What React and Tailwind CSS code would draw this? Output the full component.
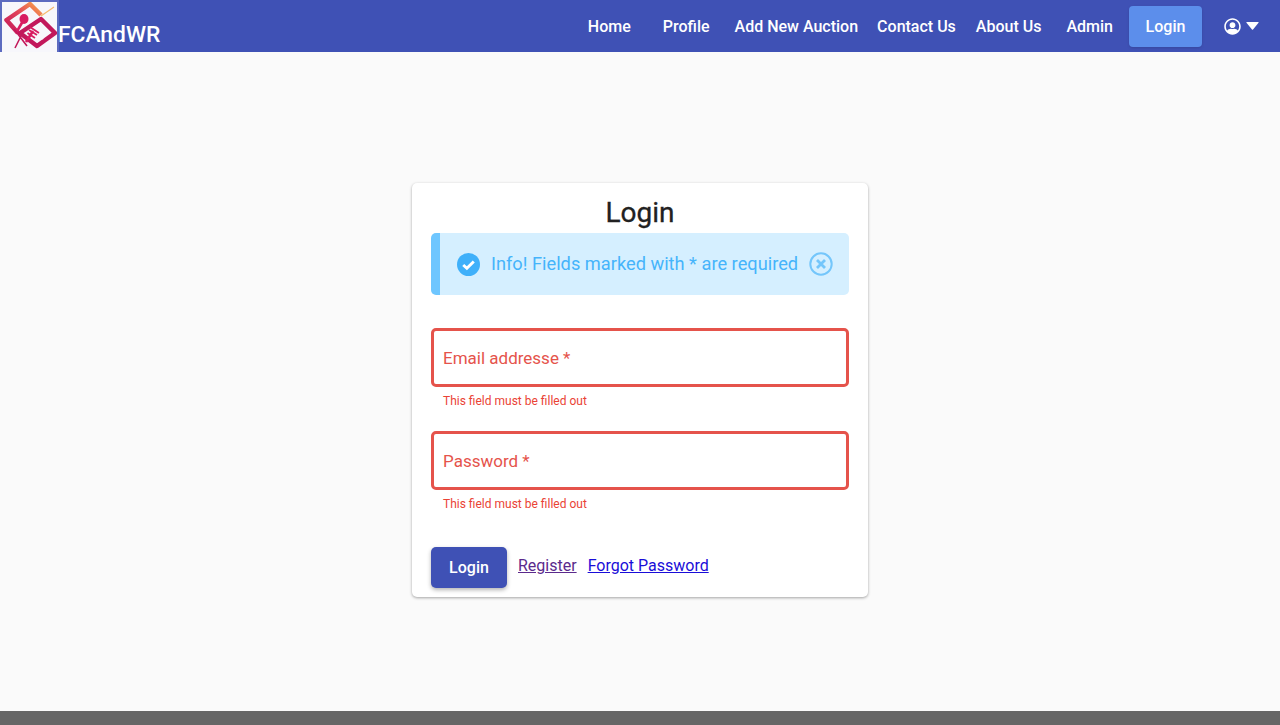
import React from "react";

/* ─── Logo ────────────────────────────────────────────────────── */
function Logo() {
  return (
    <div className="w-[59px] h-[52px] shrink-0 bg-[#f7f7fb] border-2 border-b-0 border-[#5c6bc0]">
      <svg width="55" height="50" viewBox="2 2 55 50" fill="none">
        <defs>
          <linearGradient id="logoGrad" x1="0" y1="1" x2="1" y2="0">
            <stop offset="0" stopColor="#c2185b" />
            <stop offset="0.5" stopColor="#e0405a" />
            <stop offset="1" stopColor="#f9a64a" />
          </linearGradient>
        </defs>
        <path d="M41 16 L54 7" stroke="#f6b96b" strokeWidth="1.200" />
        <path d="M18 33 L6.500 20 L30 4 L41 15" stroke="url(#logoGrad)" strokeWidth="4.500" strokeLinejoin="round" />
        <path d="M20 33 L41 19 L55 33 L37 46 Z" stroke="#c2185b" strokeWidth="4.500" strokeLinejoin="round" fill="#f7f7fb" />
        <ellipse cx="24" cy="19" rx="4.500" ry="5" fill="#d81b60" />
        <path d="M23 21 L16 33" stroke="#d81b60" strokeWidth="2.600" />
        <path d="M26 42 L33 31" stroke="#d81b60" strokeWidth="2.600" />
        <path d="M30 27 L39 33 M29 30 L37 35 M27.500 33 L35 38" stroke="#d81b60" strokeWidth="1.800" />
        <path d="M15 48 L21 36 M14 29 L27 46" stroke="#c2185b" strokeWidth="1.600" />
        <circle cx="42" cy="38" r="1.500" fill="#f7f7fb" />
      </svg>
    </div>
  );
}

/* ─── Navbar ──────────────────────────────────────────────────── */
function Navbar() {
  return (
    <nav className="h-[52px] bg-[#3f51b5] flex items-center text-white shrink-0">
      <Logo />
      <span className="text-[22.800px] font-medium leading-none mt-[18px] -ml-[1px]">FCAndWR</span>
      <div className="flex items-center ml-auto text-[16px] font-medium">
        <a className="mr-[32px] mt-[2px]">Home</a>
        <a className="mr-[25px] mt-[2px]">Profile</a>
        <a className="mr-[19px] mt-[2px]">Add New Auction</a>
        <a className="mr-[20px] mt-[2px]">Contact Us</a>
        <a className="mr-[25px] mt-[2px]">About Us</a>
        <a className="mr-[16px] mt-[2px]">Admin</a>
        <button className="w-[73px] h-[41px] rounded bg-[#5c8eeb] text-white font-medium shadow-sm pt-[2px]">Login</button>
        <div className="flex items-center ml-[22px] mr-[21px] gap-[5px]">
          <svg width="17" height="17" viewBox="0 0 512 512" fill="currentColor">
            <path d="M256 8C119 8 8 119 8 256s111 248 248 248 248-111 248-248S393 8 256 8zm0 48c110.500 0 200 89.500 200 200 0 46-15.600 88.300-41.700 122.100C393 340.500 353.300 320 304 320c-16 0-23.700 8-48 8s-32-8-48-8c-49.300 0-89 20.500-110.300 58.100C71.600 344.300 56 302 56 256c0-110.500 89.500-200 200-200zm0 72c-48.600 0-88 39.400-88 88s39.400 88 88 88 88-39.400 88-88-39.400-88-88-88z" />
          </svg>
          <svg width="13" height="8" viewBox="0 0 13 8" fill="currentColor">
            <path d="M0.800 0 H12.200 Q13 0 12.500 0.800 L7 7.600 Q6.500 8 6 7.600 L0.500 0.800 Q0 0 0.800 0 Z" />
          </svg>
        </div>
      </div>
    </nav>
  );
}

/* ─── Alert ───────────────────────────────────────────────────── */
function InfoAlert() {
  return (
    <div className="h-[62px] rounded-[5px] bg-[#d5efff] border-l-[9px] border-[#6ec6ff] flex items-center pl-[17px] text-[#45b4fb]">
      <svg width="23" height="23" viewBox="0 0 24 24" className="shrink-0">
        <circle cx="12" cy="12" r="12" fill="#3fb0fa" />
        <path d="M6.500 12.500 L10.300 16 L17.500 8.800" fill="none" stroke="#fff" strokeWidth="3" />
      </svg>
      <span className="ml-[11px] text-[18.240px] leading-none whitespace-nowrap">Info! Fields marked with * are required</span>
      <svg width="24" height="24" viewBox="0 0 24 24" fill="none" stroke="#74c6fb" className="ml-[11px] shrink-0">
        <circle cx="12" cy="12" r="10.700" strokeWidth="2" />
        <path d="M8 8 L16 16 M16 8 L8 16" strokeWidth="2.800" />
      </svg>
    </div>
  );
}

/* ─── Field ───────────────────────────────────────────────────── */
function Field({ label }) {
  return (
    <div className="flex flex-col">
      <div className="h-[59px] rounded-[5px] border-[3px] border-[#e5534b] flex items-center pl-[9px] pt-[2px] bg-white">
        <span className="text-[17px] text-[#e5534b]">{label}</span>
      </div>
      <p className="text-[12px] leading-[14px] text-[#ea4335] mt-[7px] ml-[12px]">This field must be filled out</p>
    </div>
  );
}

/* ─── Page ────────────────────────────────────────────────────── */
export default function App() {
  return (
    <div className="h-[725px] flex flex-col bg-[#fafafa] font-['Roboto',sans-serif] overflow-hidden">
      <Navbar />
      <main className="flex-1 flex justify-center pt-[131px]">
        <div className="w-[456px] h-[414px] bg-white rounded-[5px] shadow-[0_1px_3px_rgba(0,0,0,0.35)] px-[19px] pt-[9px]">
          <h1 className="text-[28px] font-normal leading-[41px] text-center text-[#212121] [-webkit-text-stroke:0.3px_#212121]">Login</h1>
          <InfoAlert />
          <div className="flex flex-col gap-[23px] mt-[33px]">
            <Field label="Email addresse *" />
            <Field label="Password *" />
          </div>
          <div className="flex items-start mt-[36px]">
            <button className="w-[76px] h-[41px] rounded-[5px] bg-[#3f51b5] text-white text-[16px] font-medium shadow-[0_2px_4px_rgba(0,0,0,0.3)] pt-[1px]">Login</button>
            <a className="ml-[11px] mt-[9px] text-[16px] leading-[19px] underline text-[#5b2a8c]">Register</a>
            <a className="ml-[11px] mt-[9px] text-[16px] leading-[19px] underline text-[#1a0dd8]">Forgot Password</a>
          </div>
        </div>
      </main>
      <footer className="h-[14px] bg-[#666666] shrink-0" />
    </div>
  );
}
